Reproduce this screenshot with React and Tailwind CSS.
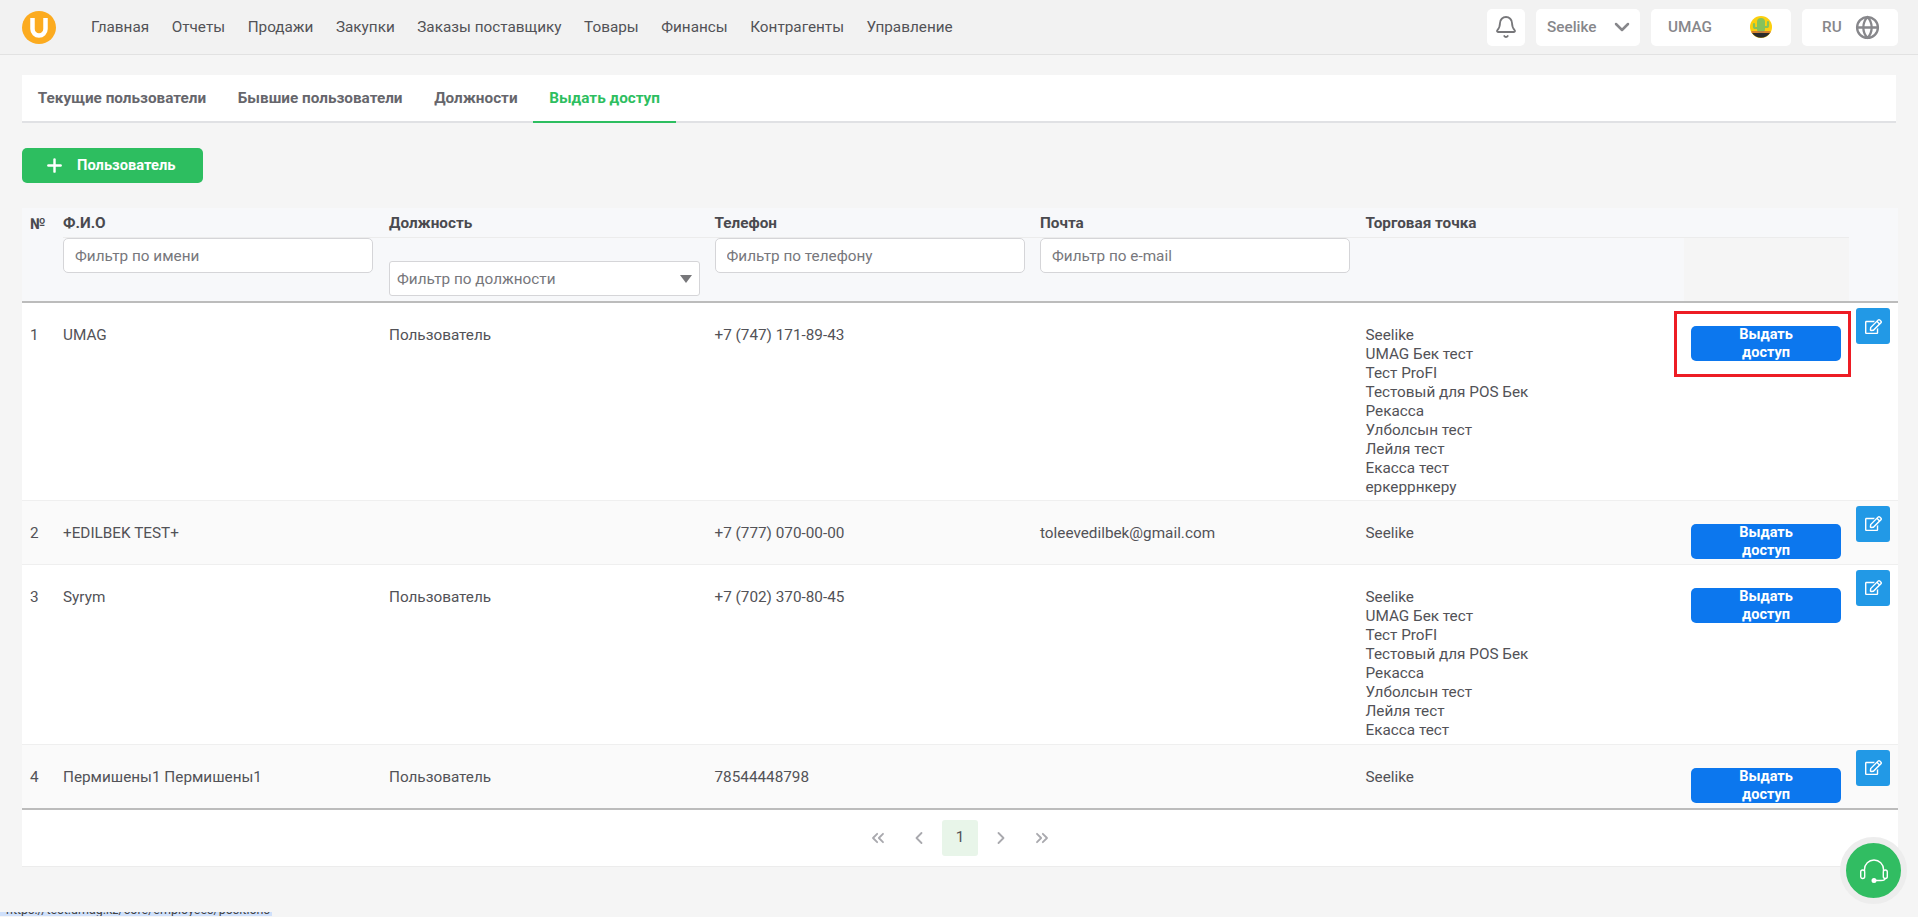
import React from "react";
import { Bell, ChevronDown, ChevronLeft, ChevronRight, ChevronsLeft, ChevronsRight, Globe, Plus } from "lucide-react";
import { FaRegEdit } from "react-icons/fa";

const menu = ["Главная", "Отчеты", "Продажи", "Закупки", "Заказы поставщику", "Товары", "Финансы", "Контрагенты", "Управление"];
const tabs = ["Текущие пользователи", "Бывшие пользователи", "Должности"];
const allShops = ["Seelike", "UMAG Бек тест", "Тест ProFI", "Тестовый для POS Бек", "Рекасса", "Улболсын тест", "Лейля тест", "Екасса тест"];

const users = [
  { id: 1, name: "UMAG", role: "Пользователь", phone: "+7 (747) 171-89-43", mail: "", shops: [...allShops, "еркеррнкеру"], h: "h-[198px]" },
  { id: 2, name: "+EDILBEK TEST+", role: "", phone: "+7 (777) 070-00-00", mail: "toleevedilbek@gmail.com", shops: ["Seelike"], h: "h-[64px]", alt: true },
  { id: 3, name: "Syrym", role: "Пользователь", phone: "+7 (702) 370-80-45", mail: "", shops: allShops, h: "h-[180px]" },
  { id: 4, name: "Пермишены1 Пермишены1", role: "Пользователь", phone: "78544448798", mail: "", shops: ["Seelike"], h: "h-[64px]", alt: true },
];

const Logo = () => (
  <svg width="34" height="33" viewBox="0 0 34 33" className="ml-[22px] shrink-0">
    <ellipse cx="17" cy="16.5" rx="17" ry="16.5" fill="#fcab1f" />
    <path d="M10.5 7v11a6.5 6.5 0 0 0 13 0V7" fill="none" stroke="#fff" strokeWidth="4.5" />
  </svg>
);

const Cactus = () => (
  <svg width="22" height="22" viewBox="0 0 22 22">
    <circle cx="11" cy="11" r="11" fill="#fccf0d" />
    <path d="M2 17h18a11 11 0 0 1-18 0z" fill="#2b2b2b" />
    <rect x="7" y="2" width="8" height="15" rx="4" fill="#86c25b" />
    <path d="M7 12H5.5A1.5 1.5 0 0 1 4 10.500V8M15 11h1.500A1.500 1.500 0 0 0 18 9.500V6" fill="none" stroke="#86c25b" strokeWidth="2.2" strokeLinecap="round" />
    <path d="M1.500 16h19" stroke="#c9683a" strokeWidth="1.5" />
  </svg>
);

const HeadsetIcon = () => (
  <svg width="28" height="24" viewBox="0 0 28 24" fill="none" stroke="#fff" strokeWidth="1.4">
    <path d="M4.500 12V10.500a9.500 9.500 0 0 1 19 0V12" />
    <rect x="0.700" y="11" width="4" height="8.500" rx="2" />
    <rect x="23.300" y="11" width="4" height="8.500" rx="2" />
    <path d="M25 19.500c0 1.500-2 2-4 2h-6" />
    <circle cx="14" cy="21.500" r="1.800" fill="#fff" />
  </svg>
);

const FilterInput = ({ placeholder }) => (
  <input
    placeholder={placeholder}
    className="block h-[35px] w-[310px] rounded-[5px] border border-[#d5d5d8] bg-white px-[11px] pt-[2px] text-[15.3px] text-[#555] placeholder:text-[#77777c] outline-none"
  />
);

const PageArrow = ({ children }) => (
  <span className="flex h-9 w-9 items-center justify-center text-[#a9a9ae]">{children}</span>
);

const App = () => {
  return (
    <div className="relative h-[917px] overflow-hidden bg-[#f5f5f5] font-['Roboto',sans-serif] text-[15.3px] text-[#525257]">
      <header className="flex h-[55px] items-center border-b border-[#e2e2e2] bg-[#f2f2f2]">
        <Logo />
        <nav className="ml-[35px] flex gap-[22.5px] text-[15.3px] text-[#525257]">
          {menu.map((m) => (
            <span key={m}>{m}</span>
          ))}
        </nav>
        <div className="ml-auto mr-[20px] flex h-[37px] gap-[11px] text-[#87878b]">
          <div className="flex w-[38px] items-center justify-center rounded-[5px] bg-white">
            <Bell size={24} strokeWidth={1.8} className="text-[#77777a]" />
          </div>
          <div className="flex w-[104px] items-center justify-between rounded-[5px] bg-white pl-[11px] pr-[6px] font-medium">
            <span>Seelike</span>
            <ChevronDown size={24} strokeWidth={2.5} />
          </div>
          <div className="flex w-[140px] items-center justify-between rounded-[5px] bg-white pl-[17px] pr-[19px] font-medium">
            <span>UMAG</span>
            <Cactus />
          </div>
          <div className="flex w-[96px] items-center justify-between rounded-[5px] bg-white pl-[20px] pr-[18px] font-medium">
            <span>RU</span>
            <Globe size={25} strokeWidth={2.2} />
          </div>
        </div>
      </header>

      <main className="px-[22px]">
        <div className="mt-[20px] flex h-[48px] border-b-2 border-[#e0e1e4] bg-white font-bold text-[#66666c]">
          {tabs.map((t) => (
            <span key={t} className="flex h-[46px] items-center px-[15.8px]">
              {t}
            </span>
          ))}
          <span className="flex h-[48px] items-center border-b-2 border-[#2dbe60] px-[15.8px] text-[#2dbe60]">
            Выдать доступ
          </span>
        </div>

        <button className="mt-[25px] flex h-[35px] w-[181px] items-center rounded-[5px] bg-[#2dbe60] pl-[22px] text-[14.7px] font-bold text-white">
          <Plus size={21} strokeWidth={2.8} />
          <span className="ml-[12px]">Пользователь</span>
        </button>

        <table className="mt-[25px] w-[1876px] table-fixed border-collapse">
          <colgroup>
            <col className="w-[41px]" />
            <col className="w-[326px]" />
            <col className="w-[325.5px]" />
            <col className="w-[325.5px]" />
            <col className="w-[325.5px]" />
            <col className="w-[318.5px]" />
            <col className="w-[165px]" />
            <col className="w-[49px]" />
          </colgroup>
          <thead>
            <tr className="h-[29px] bg-[#f7f8fa] text-left font-bold text-[#4a4a4f]">
              <th className="pl-[8px] align-top pt-[5px]" rowSpan={2}>№</th>
              <th className="border-b border-[#ececec] pt-[3px]">Ф.И.О</th>
              <th className="border-b border-[#ececec] pt-[3px]">Должность</th>
              <th className="border-b border-[#ececec] pt-[3px]">Телефон</th>
              <th className="border-b border-[#ececec] pt-[3px]">Почта</th>
              <th className="border-b border-[#ececec] pt-[3px]">Торговая точка</th>
              <th className="border-b border-[#ececec]"></th>
              <th></th>
            </tr>
            <tr className="h-[65px] border-b-2 border-[#bcbcbc] bg-[#f7f8fa] align-top">
              <td><FilterInput placeholder="Фильтр по имени" /></td>
              <td className="pt-[23px]">
                <div className="flex h-[35px] w-[311px] items-center justify-between rounded-[3px] border border-[#d5d5d8] bg-white pl-[7px] pr-[7px] pt-[2px] text-[#77777c]">
                  <span>Фильтр по должности</span>
                  <span className="h-0 w-0 border-x-[6px] border-t-[8px] border-x-transparent border-t-[#77777a]"></span>
                </div>
              </td>
              <td><FilterInput placeholder="Фильтр по телефону" /></td>
              <td><FilterInput placeholder="Фильтр по e-mail" /></td>
              <td></td>
              <td className="bg-[#f5f5f5]"></td>
              <td></td>
            </tr>
          </thead>
          <tbody>
            {users.map((u) => (
              <tr key={u.id} className={`${u.h} border-b border-[#efefef] align-top ${u.alt ? "bg-[#fafafa]" : "bg-white"}`}>
                <td className="pl-[8px] pt-[23px] leading-[19px]">{u.id}</td>
                <td className="pt-[23px] leading-[19px]">{u.name}</td>
                <td className="pt-[23px] leading-[19px]">{u.role}</td>
                <td className="pt-[23px] leading-[19px]">{u.phone}</td>
                <td className="pt-[23px] leading-[19px]">{u.mail}</td>
                <td className="pt-[23px] leading-[19px]">
                  {u.shops.map((s) => (
                    <div key={s}>{s}</div>
                  ))}
                </td>
                <td className="pt-[23px]">
                  <button className="ml-[7px] flex h-[35px] w-[150px] flex-col items-center rounded-[5px] bg-[#0c77ee] text-[14.5px] font-bold leading-[18px] text-white">
                    <span>Выдать</span>
                    <span>доступ</span>
                  </button>
                </td>
                <td className="pt-[5px]">
                  <span className="ml-[7px] flex h-[36px] w-[34px] items-center justify-center rounded-[3px] bg-[#2299e6] text-white">
                    <FaRegEdit size={17} />
                  </span>
                </td>
              </tr>
            ))}
          </tbody>
        </table>

        <div className="-mt-px flex h-[59px] w-[1876px] items-center justify-center gap-[5px] border-t-2 border-b border-t-[#bcbcbc] border-b-[#ececec] bg-white">
          <PageArrow><ChevronsLeft size={20} strokeWidth={2.2} /></PageArrow>
          <PageArrow><ChevronLeft size={20} strokeWidth={2.2} /></PageArrow>
          <span className="flex h-9 w-9 items-center justify-center rounded-[3px] bg-[#e8f5e9] text-[#525257]">1</span>
          <PageArrow><ChevronRight size={20} strokeWidth={2.2} /></PageArrow>
          <PageArrow><ChevronsRight size={20} strokeWidth={2.2} /></PageArrow>
        </div>
      </main>

      {/* рамка поверх кнопки */}
      <div className="absolute left-[1674px] top-[311px] h-[66px] w-[177px] border-[3px] border-[#ed1c24]"></div>

      <div className="absolute left-[1840px] top-[837px] flex h-[67px] w-[67px] items-center justify-center rounded-full border-[6px] border-[#ededed] bg-[#31bd62]">
        <HeadsetIcon />
      </div>

      <div className="absolute bottom-[1px] left-0 h-[4px] w-[272px] overflow-hidden bg-[#cfe0fb]">
        <span className="absolute -top-[9px] left-[6px] whitespace-nowrap text-[12.5px] leading-[14px] text-[#444]">https://test.umag.kz/core/employees/positions</span>
      </div>
    </div>
  );
};

export default App;
